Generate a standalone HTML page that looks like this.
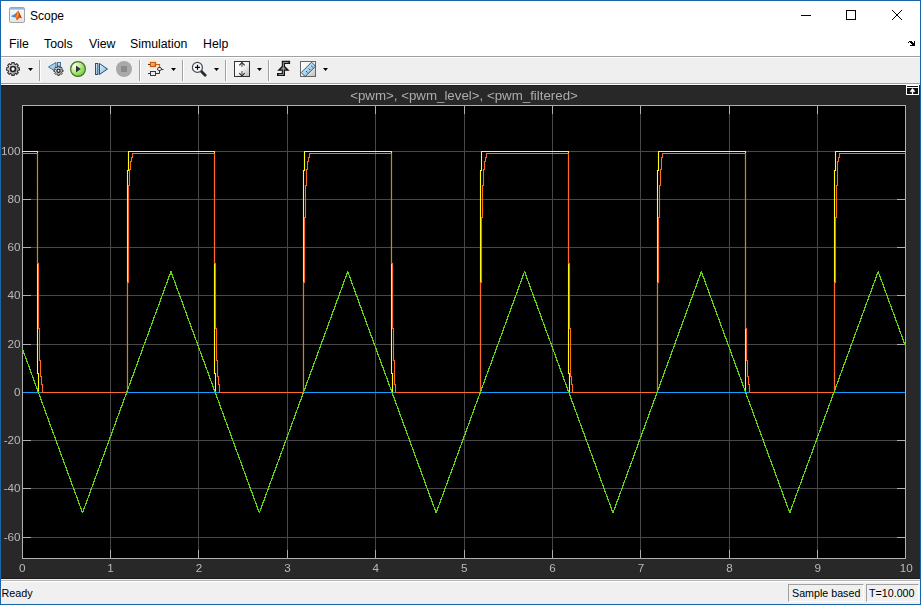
<!DOCTYPE html>
<html><head><meta charset="utf-8"><style>
html,body{margin:0;padding:0;}
body{width:921px;height:605px;position:relative;overflow:hidden;background:#fff;font-family:"Liberation Sans",sans-serif;}
.abs{position:absolute;}
.title{position:absolute;left:30px;top:9px;font-size:12px;color:#000;}
.menu{position:absolute;top:37px;font-size:12.3px;color:#000;}
.xl{position:absolute;top:560.5px;width:40px;text-align:center;font-size:11.7px;color:#b9b9b9;}
.yl{position:absolute;left:0;width:20.6px;text-align:right;font-size:11.7px;color:#b9b9b9;}
.ptitle{position:absolute;left:22px;width:884px;top:88px;text-align:center;font-size:13.3px;color:#acacac;}
.sbox{position:absolute;top:584px;height:16px;border-top:1px solid #a0a0a0;border-left:1px solid #a0a0a0;border-bottom:1px solid #fff;border-right:1px solid #fff;font-size:10.7px;color:#000;line-height:16px;}
</style></head><body>
<div class="abs" style="left:0;top:0;width:921px;height:1px;background:#1964aa"></div>
<div class="abs" style="left:0;top:0;width:1px;height:605px;background:#1964aa"></div>
<div class="abs" style="left:920px;top:0;width:1px;height:605px;background:#1964aa"></div>
<svg class="abs" style="left:9px;top:7px" width="16" height="16" viewBox="0 0 16 16">
<defs><linearGradient id="ib" x1="0" y1="0" x2="0" y2="1"><stop offset="0" stop-color="#fbfbfb"/><stop offset="1" stop-color="#e4e4e4"/></linearGradient></defs>
<rect x="0.5" y="0.5" width="15" height="15" rx="1.2" fill="url(#ib)" stroke="#a4a4a4"/>
<rect x="1" y="1" width="14" height="1.6" fill="#8fb6de"/>
<path d="M1.8 9.3 L6.8 6.4 L8.2 9.6 L5.5 10.6 Z" fill="#3f8fd0"/>
<path d="M6.6 6.6 L9.3 3.6 L11 7.5 L12.8 11.2 L10.8 10.4 L7.8 13.6 L6.6 10.4 Z" fill="#e0561e"/>
<path d="M9.3 3.6 L11 7.5 L12.8 11.2 L10.8 10.4 Z" fill="#b8301a"/>
<path d="M8.2 5.6 L9.3 3.6 L9.6 7.8 L7.6 12.2 L7.3 9.4 Z" fill="#f0a030"/>
</svg>
<div class="title">Scope</div>
<div class="abs" style="left:801px;top:15px;width:10px;height:1px;background:#000"></div>
<div class="abs" style="left:846px;top:10px;width:8px;height:8px;border:1px solid #000"></div>
<svg class="abs" style="left:891px;top:9px" width="12" height="12" viewBox="0 0 12 12"><path d="M1 1 L11 11 M11 1 L1 11" stroke="#000" stroke-width="1"/></svg>
<div class="menu" style="left:9px">File</div>
<div class="menu" style="left:44px">Tools</div>
<div class="menu" style="left:89px">View</div>
<div class="menu" style="left:130px">Simulation</div>
<div class="menu" style="left:203px">Help</div>
<svg class="abs" style="left:904px;top:36px" width="14" height="14" shape-rendering="crispEdges"><g fill="#000"><rect x="4" y="6" width="1" height="1"/><rect x="5" y="5" width="3" height="1"/><rect x="6" y="6" width="3" height="1"/><rect x="7" y="7" width="3" height="1"/><rect x="8" y="8" width="3" height="1"/><rect x="10" y="5" width="1" height="5"/><rect x="6" y="9" width="5" height="1"/></g></svg>
<div class="abs" style="left:1px;top:56px;width:919px;height:1px;background:#a0a0a0"></div>
<div class="abs" style="left:1px;top:57px;width:919px;height:1px;background:#fff"></div>
<div class="abs" style="left:1px;top:58px;width:919px;height:25px;background:#efefef"></div>
<div class="abs" style="left:1px;top:83px;width:919px;height:1px;background:#a0a0a0"></div>
<div class="abs" style="left:1px;top:84px;width:919px;height:1px;background:#fff"></div>
<svg class="abs" style="left:0;top:0" width="921" height="90">
<defs>
<linearGradient id="gg" x1="0" y1="0" x2="1" y2="1"><stop offset="0" stop-color="#fafafa"/><stop offset="1" stop-color="#9a9a9a"/></linearGradient>
<radialGradient id="pg" cx="0.3" cy="0.3" r="0.8"><stop offset="0" stop-color="#ffffff"/><stop offset="0.45" stop-color="#bdee90"/><stop offset="1" stop-color="#6cc832"/></radialGradient>
<linearGradient id="bg" x1="0" y1="0" x2="1" y2="1"><stop offset="0" stop-color="#e6f4fc"/><stop offset="1" stop-color="#6cb4e4"/></linearGradient>
<linearGradient id="wg" x1="0" y1="0" x2="1" y2="1"><stop offset="0" stop-color="#ffffff"/><stop offset="0.5" stop-color="#f4f4f4"/><stop offset="1" stop-color="#b8b8b8"/></linearGradient>
<linearGradient id="og" x1="0" y1="0" x2="1" y2="1"><stop offset="0" stop-color="#ffd9a8"/><stop offset="1" stop-color="#e8781e"/></linearGradient>
</defs>
<g shape-rendering="crispEdges" fill="#a0a0a0">
<rect x="39" y="60" width="1" height="21"/><rect x="139" y="60" width="1" height="21"/><rect x="182" y="60" width="1" height="21"/><rect x="225" y="60" width="1" height="21"/><rect x="268" y="60" width="1" height="21"/>
</g>
<g fill="#fff" shape-rendering="crispEdges">
<rect x="40" y="60" width="1" height="21"/><rect x="140" y="60" width="1" height="21"/><rect x="183" y="60" width="1" height="21"/><rect x="226" y="60" width="1" height="21"/><rect x="269" y="60" width="1" height="21"/>
</g>
<!-- gear -->
<path d="M17.71,67.05 L17.96,67.81 L19.38,67.78 L19.38,70.22 L17.96,70.19 L17.71,70.95 L17.35,71.66 L18.38,72.65 L16.65,74.38 L15.66,73.35 L14.95,73.71 L14.19,73.96 L14.22,75.38 L11.78,75.38 L11.81,73.96 L11.05,73.71 L10.34,73.35 L9.35,74.38 L7.62,72.65 L8.65,71.66 L8.29,70.95 L8.04,70.19 L6.62,70.22 L6.62,67.78 L8.04,67.81 L8.29,67.05 L8.65,66.34 L7.62,65.35 L9.35,63.62 L10.34,64.65 L11.05,64.29 L11.81,64.04 L11.78,62.62 L14.22,62.62 L14.19,64.04 L14.95,64.29 L15.66,64.65 L16.65,63.62 L18.38,65.35 L17.35,66.34Z" fill="url(#gg)" stroke="#333" stroke-width="1.1" stroke-linejoin="round"/>
<circle cx="13" cy="69" r="2.5" fill="#fff" stroke="#222" stroke-width="1.7"/>
<path d="M28 68h5l-2.5 3z" fill="#000"/>
<!-- step back -->
<path d="M48.5 67 L56 62.5 V71.5 Z" fill="url(#bg)" stroke="#3f6f9a" stroke-width="1"/>
<rect x="57.5" y="62.5" width="3" height="6" fill="url(#bg)" stroke="#3f6f9a" stroke-width="1"/>
<path d="M61.83,69.42 L62.00,69.96 L63.02,69.94 L63.02,71.66 L62.00,71.64 L61.83,72.18 L61.57,72.68 L62.30,73.39 L61.09,74.60 L60.38,73.87 L59.88,74.13 L59.34,74.30 L59.36,75.32 L57.64,75.32 L57.66,74.30 L57.12,74.13 L56.62,73.87 L55.91,74.60 L54.70,73.39 L55.43,72.68 L55.17,72.18 L55.00,71.64 L53.98,71.66 L53.98,69.94 L55.00,69.96 L55.17,69.42 L55.43,68.92 L54.70,68.21 L55.91,67.00 L56.62,67.73 L57.12,67.47 L57.66,67.30 L57.64,66.28 L59.36,66.28 L59.34,67.30 L59.88,67.47 L60.38,67.73 L61.09,67.00 L62.30,68.21 L61.57,68.92Z" fill="url(#gg)" stroke="#333" stroke-width="1" stroke-linejoin="round"/>
<circle cx="58.5" cy="70.8" r="1.6" fill="#fff" stroke="#222" stroke-width="1.3"/>
<!-- play -->
<circle cx="78" cy="69" r="7.4" fill="url(#pg)" stroke="#457324" stroke-width="1.2"/>
<path d="M76 65.5 L80.8 69 L76 72.4 Z" fill="#333"/>
<!-- step fwd -->
<rect x="95.5" y="63.5" width="2.4" height="11" fill="url(#bg)" stroke="#2f4f6f" stroke-width="1"/>
<path d="M99.5 63.5 L107.5 69 L99.5 74.5 Z" fill="url(#bg)" stroke="#2f4f6f" stroke-width="1"/>
<!-- stop -->
<circle cx="124" cy="69" r="8" fill="#a9a9a9"/>
<rect x="121" y="66" width="6" height="6" fill="#8a8a8a"/>
<!-- signal hierarchy -->
<rect x="148.5" y="60.5" width="9" height="7" rx="1.5" fill="#ffe9a0" opacity="0.8"/>
<path d="M148 64.5h2M156 64.5h3.5v3M159.5 70.5v3h-3.5M148 73.5h2M161.5 69.5h2" stroke="#333" stroke-width="1" fill="none"/>
<path d="M156 64.5h3.5v3" stroke="#d05a10" stroke-width="1.2" fill="none"/>
<rect x="150.5" y="62.5" width="5" height="4" fill="url(#og)" stroke="#c85a14" stroke-width="1.2"/>
<rect x="157.5" y="67.5" width="4" height="3" rx="1.5" fill="#f4f4f4" stroke="#3a3a3a" stroke-width="1"/>
<rect x="150.5" y="71.5" width="5" height="4" fill="#ececec" stroke="#3a3a3a" stroke-width="1"/>
<path d="M171 68h5l-2.5 3z" fill="#000"/>
<!-- zoom -->
<path d="M201 71 L205.2 75.2" stroke="#2a2a2a" stroke-width="2.8" stroke-linecap="round"/>
<circle cx="197.4" cy="67.4" r="5" fill="#f4f8fc" stroke="#484848" stroke-width="1.2"/>
<path d="M195 67.3h5M197.5 64.8v5" stroke="#000" stroke-width="1.2"/>
<path d="M214 68h5l-2.5 3z" fill="#000"/>
<!-- scale y -->
<rect x="234.5" y="61.5" width="15" height="15" fill="url(#wg)" stroke="#333" stroke-width="1"/>
<path d="M242 62 L242 67" stroke="#888" stroke-width="1.6"/>
<path d="M239.3 65.3 L242 62.6 L244.7 65.3" stroke="#333" stroke-width="1.2" fill="none"/>
<path d="M242 71 L242 76" stroke="#888" stroke-width="1.6"/>
<path d="M239.3 73.2 L242 75.9 L244.7 73.2" stroke="#333" stroke-width="1.2" fill="none"/>
<path d="M257 68h5l-2.5 3z" fill="#000"/>
<!-- trigger -->
<path d="M278.6 74.5 H283.4 V62.4 H288.5" stroke="#141414" stroke-width="3.2" fill="none" stroke-linecap="square"/>
<path d="M278.7 70.2 L283.4 65.5 L288.1 70.2 Z" fill="#8e8e8e" stroke="#141414" stroke-width="1.3" stroke-linejoin="miter"/>
<path d="M278.6 74.5 H283.4 V62.4 H288.5" stroke="#959595" stroke-width="1" fill="none"/>
<!-- ruler -->
<rect x="300.5" y="61.5" width="15" height="15" fill="url(#wg)" stroke="#666" stroke-width="1"/>
<path d="M301.2 72.6 L311.6 62.2 L315.6 66.2 L305.2 76.6 Z" fill="url(#bg)" stroke="#2c3c4c" stroke-width="0.85"/>
<path d="M311.2 65.8l1.6 1.6M308.6 68.4l1.6 1.6M306 71l1.6 1.6" stroke="#2c3c4c" stroke-width="0.9"/>
<path d="M323 68h5l-2.5 3z" fill="#000"/>
</svg>
<div class="abs" style="left:1px;top:85px;width:919px;height:1px;background:#1c1c1c"></div>
<div class="abs" style="left:1px;top:86px;width:919px;height:492px;background:#282828"></div>
<svg class="abs" style="left:0;top:0" width="921" height="605">
<rect x="22" y="105" width="884" height="454" fill="#000"/>
<path d="M110.5 106V558M198.5 106V558M287.5 106V558M375.5 106V558M464.5 106V558M552.5 106V558M640.5 106V558M729.5 106V558M817.5 106V558M23 537.5H905M23 488.5H905M23 440.5H905M23 392.5H905M23 344.5H905M23 295.5H905M23 247.5H905M23 199.5H905M23 151.5H905" stroke="#484848" stroke-width="1" shape-rendering="crispEdges"/>
<path d="M110.5 106V114M110.5 550V558M198.5 106V114M198.5 550V558M287.5 106V114M287.5 550V558M375.5 106V114M375.5 550V558M464.5 106V114M464.5 550V558M552.5 106V114M552.5 550V558M640.5 106V114M640.5 550V558M729.5 106V114M729.5 550V558M817.5 106V114M817.5 550V558M23 537.5H31M897 537.5H905M23 488.5H31M897 488.5H905M23 440.5H31M897 440.5H905M23 392.5H31M897 392.5H905M23 344.5H31M897 344.5H905M23 295.5H31M897 295.5H905M23 247.5H31M897 247.5H905M23 199.5H31M897 199.5H905M23 151.5H31M897 151.5H905" stroke="#b0b0b0" stroke-width="1" shape-rendering="crispEdges"/>
<rect x="22.5" y="105.5" width="883" height="453" fill="none" stroke="#afafaf" stroke-width="1" shape-rendering="crispEdges"/>
<clipPath id="pc"><rect x="22" y="105" width="884" height="454"/></clipPath>
<g clip-path="url(#pc)">
<path d="M21.5 151.5H22.5H23.5H24.5H25.5H26.5H27.5H28.5H29.5H30.5H31.5H32.5H33.5H34.5H35.5H36.5H37.5V373.5H38.5V392.5H39.5H40.5H41.5H42.5H43.5H44.5H45.5H46.5H47.5H48.5H49.5H50.5H51.5H52.5H53.5H54.5H55.5H56.5H57.5H58.5H59.5H60.5H61.5H62.5H63.5H64.5H65.5H66.5H67.5H68.5H69.5H70.5H71.5H72.5H73.5H74.5H75.5H76.5H77.5H78.5H79.5H80.5H81.5H82.5H83.5H84.5H85.5H86.5H87.5H88.5H89.5H90.5H91.5H92.5H93.5H94.5H95.5H96.5H97.5H98.5H99.5H100.5H101.5H102.5H103.5H104.5H105.5H106.5H107.5H108.5H109.5H110.5H111.5H112.5H113.5H114.5H115.5H116.5H117.5H118.5H119.5H120.5H121.5H122.5H123.5H124.5H125.5H126.5H127.5V170.5H128.5V151.5H129.5H130.5H131.5H132.5H133.5H134.5H135.5H136.5H137.5H138.5H139.5H140.5H141.5H142.5H143.5H144.5H145.5H146.5H147.5H148.5H149.5H150.5H151.5H152.5H153.5H154.5H155.5H156.5H157.5H158.5H159.5H160.5H161.5H162.5H163.5H164.5H165.5H166.5H167.5H168.5H169.5H170.5H171.5H172.5H173.5H174.5H175.5H176.5H177.5H178.5H179.5H180.5H181.5H182.5H183.5H184.5H185.5H186.5H187.5H188.5H189.5H190.5H191.5H192.5H193.5H194.5H195.5H196.5H197.5H198.5H199.5H200.5H201.5H202.5H203.5H204.5H205.5H206.5H207.5H208.5H209.5H210.5H211.5H212.5H213.5H214.5V373.5H215.5V392.5H216.5H217.5H218.5H219.5H220.5H221.5H222.5H223.5H224.5H225.5H226.5H227.5H228.5H229.5H230.5H231.5H232.5H233.5H234.5H235.5H236.5H237.5H238.5H239.5H240.5H241.5H242.5H243.5H244.5H245.5H246.5H247.5H248.5H249.5H250.5H251.5H252.5H253.5H254.5H255.5H256.5H257.5H258.5H259.5H260.5H261.5H262.5H263.5H264.5H265.5H266.5H267.5H268.5H269.5H270.5H271.5H272.5H273.5H274.5H275.5H276.5H277.5H278.5H279.5H280.5H281.5H282.5H283.5H284.5H285.5H286.5H287.5H288.5H289.5H290.5H291.5H292.5H293.5H294.5H295.5H296.5H297.5H298.5H299.5H300.5H301.5H302.5H303.5V170.5H304.5V151.5H305.5H306.5H307.5H308.5H309.5H310.5H311.5H312.5H313.5H314.5H315.5H316.5H317.5H318.5H319.5H320.5H321.5H322.5H323.5H324.5H325.5H326.5H327.5H328.5H329.5H330.5H331.5H332.5H333.5H334.5H335.5H336.5H337.5H338.5H339.5H340.5H341.5H342.5H343.5H344.5H345.5H346.5H347.5H348.5H349.5H350.5H351.5H352.5H353.5H354.5H355.5H356.5H357.5H358.5H359.5H360.5H361.5H362.5H363.5H364.5H365.5H366.5H367.5H368.5H369.5H370.5H371.5H372.5H373.5H374.5H375.5H376.5H377.5H378.5H379.5H380.5H381.5H382.5H383.5H384.5H385.5H386.5H387.5H388.5H389.5H390.5H391.5V373.5H392.5V392.5H393.5H394.5H395.5H396.5H397.5H398.5H399.5H400.5H401.5H402.5H403.5H404.5H405.5H406.5H407.5H408.5H409.5H410.5H411.5H412.5H413.5H414.5H415.5H416.5H417.5H418.5H419.5H420.5H421.5H422.5H423.5H424.5H425.5H426.5H427.5H428.5H429.5H430.5H431.5H432.5H433.5H434.5H435.5H436.5H437.5H438.5H439.5H440.5H441.5H442.5H443.5H444.5H445.5H446.5H447.5H448.5H449.5H450.5H451.5H452.5H453.5H454.5H455.5H456.5H457.5H458.5H459.5H460.5H461.5H462.5H463.5H464.5H465.5H466.5H467.5H468.5H469.5H470.5H471.5H472.5H473.5H474.5H475.5H476.5H477.5H478.5H479.5H480.5V170.5H481.5V151.5H482.5H483.5H484.5H485.5H486.5H487.5H488.5H489.5H490.5H491.5H492.5H493.5H494.5H495.5H496.5H497.5H498.5H499.5H500.5H501.5H502.5H503.5H504.5H505.5H506.5H507.5H508.5H509.5H510.5H511.5H512.5H513.5H514.5H515.5H516.5H517.5H518.5H519.5H520.5H521.5H522.5H523.5H524.5H525.5H526.5H527.5H528.5H529.5H530.5H531.5H532.5H533.5H534.5H535.5H536.5H537.5H538.5H539.5H540.5H541.5H542.5H543.5H544.5H545.5H546.5H547.5H548.5H549.5H550.5H551.5H552.5H553.5H554.5H555.5H556.5H557.5H558.5H559.5H560.5H561.5H562.5H563.5H564.5H565.5H566.5H567.5H568.5V373.5H569.5V392.5H570.5H571.5H572.5H573.5H574.5H575.5H576.5H577.5H578.5H579.5H580.5H581.5H582.5H583.5H584.5H585.5H586.5H587.5H588.5H589.5H590.5H591.5H592.5H593.5H594.5H595.5H596.5H597.5H598.5H599.5H600.5H601.5H602.5H603.5H604.5H605.5H606.5H607.5H608.5H609.5H610.5H611.5H612.5H613.5H614.5H615.5H616.5H617.5H618.5H619.5H620.5H621.5H622.5H623.5H624.5H625.5H626.5H627.5H628.5H629.5H630.5H631.5H632.5H633.5H634.5H635.5H636.5H637.5H638.5H639.5H640.5H641.5H642.5H643.5H644.5H645.5H646.5H647.5H648.5H649.5H650.5H651.5H652.5H653.5H654.5H655.5H656.5H657.5V170.5H658.5V151.5H659.5H660.5H661.5H662.5H663.5H664.5H665.5H666.5H667.5H668.5H669.5H670.5H671.5H672.5H673.5H674.5H675.5H676.5H677.5H678.5H679.5H680.5H681.5H682.5H683.5H684.5H685.5H686.5H687.5H688.5H689.5H690.5H691.5H692.5H693.5H694.5H695.5H696.5H697.5H698.5H699.5H700.5H701.5H702.5H703.5H704.5H705.5H706.5H707.5H708.5H709.5H710.5H711.5H712.5H713.5H714.5H715.5H716.5H717.5H718.5H719.5H720.5H721.5H722.5H723.5H724.5H725.5H726.5H727.5H728.5H729.5H730.5H731.5H732.5H733.5H734.5H735.5H736.5H737.5H738.5H739.5H740.5H741.5H742.5H743.5H744.5H745.5V373.5V392.5H746.5H747.5H748.5H749.5H750.5H751.5H752.5H753.5H754.5H755.5H756.5H757.5H758.5H759.5H760.5H761.5H762.5H763.5H764.5H765.5H766.5H767.5H768.5H769.5H770.5H771.5H772.5H773.5H774.5H775.5H776.5H777.5H778.5H779.5H780.5H781.5H782.5H783.5H784.5H785.5H786.5H787.5H788.5H789.5H790.5H791.5H792.5H793.5H794.5H795.5H796.5H797.5H798.5H799.5H800.5H801.5H802.5H803.5H804.5H805.5H806.5H807.5H808.5H809.5H810.5H811.5H812.5H813.5H814.5H815.5H816.5H817.5H818.5H819.5H820.5H821.5H822.5H823.5H824.5H825.5H826.5H827.5H828.5H829.5H830.5H831.5H832.5H833.5H834.5V170.5H835.5V151.5H836.5H837.5H838.5H839.5H840.5H841.5H842.5H843.5H844.5H845.5H846.5H847.5H848.5H849.5H850.5H851.5H852.5H853.5H854.5H855.5H856.5H857.5H858.5H859.5H860.5H861.5H862.5H863.5H864.5H865.5H866.5H867.5H868.5H869.5H870.5H871.5H872.5H873.5H874.5H875.5H876.5H877.5H878.5H879.5H880.5H881.5H882.5H883.5H884.5H885.5H886.5H887.5H888.5H889.5H890.5H891.5H892.5H893.5H894.5H895.5H896.5H897.5H898.5H899.5H900.5H901.5H902.5H903.5H904.5H905.5" fill="none" stroke="#ffff11" stroke-width="1.1"/>
<path d="M23 392.5H905" stroke="#139fff" stroke-width="1.1"/>
<path d="M21.5 153.5H22.5H23.5H24.5H25.5H26.5H27.5H28.5H29.5H30.5H31.5H32.5H33.5H34.5H35.5H36.5H37.5V263.5H38.5V328.5H39.5V360.5H40.5V376.5H41.5V384.5H42.5V392.5H43.5H44.5H45.5H46.5H47.5H48.5H49.5H50.5H51.5H52.5H53.5H54.5H55.5H56.5H57.5H58.5H59.5H60.5H61.5H62.5H63.5H64.5H65.5H66.5H67.5H68.5H69.5H70.5H71.5H72.5H73.5H74.5H75.5H76.5H77.5H78.5H79.5H80.5H81.5H82.5H83.5H84.5H85.5H86.5H87.5H88.5H89.5H90.5H91.5H92.5H93.5H94.5H95.5H96.5H97.5H98.5H99.5H100.5H101.5H102.5H103.5H104.5H105.5H106.5H107.5H108.5H109.5H110.5H111.5H112.5H113.5H114.5H115.5H116.5H117.5H118.5H119.5H120.5H121.5H122.5H123.5H124.5H125.5H126.5H127.5V282.5H128.5V217.5V185.5H129.5V169.5H130.5V161.5H131.5V157.5H132.5V153.5H133.5H134.5H135.5H136.5H137.5H138.5H139.5H140.5H141.5H142.5H143.5H144.5H145.5H146.5H147.5H148.5H149.5H150.5H151.5H152.5H153.5H154.5H155.5H156.5H157.5H158.5H159.5H160.5H161.5H162.5H163.5H164.5H165.5H166.5H167.5H168.5H169.5H170.5H171.5H172.5H173.5H174.5H175.5H176.5H177.5H178.5H179.5H180.5H181.5H182.5H183.5H184.5H185.5H186.5H187.5H188.5H189.5H190.5H191.5H192.5H193.5H194.5H195.5H196.5H197.5H198.5H199.5H200.5H201.5H202.5H203.5H204.5H205.5H206.5H207.5H208.5H209.5H210.5H211.5H212.5H213.5H214.5V263.5H215.5V328.5H216.5V360.5H217.5V376.5H218.5V384.5H219.5V392.5H220.5H221.5H222.5H223.5H224.5H225.5H226.5H227.5H228.5H229.5H230.5H231.5H232.5H233.5H234.5H235.5H236.5H237.5H238.5H239.5H240.5H241.5H242.5H243.5H244.5H245.5H246.5H247.5H248.5H249.5H250.5H251.5H252.5H253.5H254.5H255.5H256.5H257.5H258.5H259.5H260.5H261.5H262.5H263.5H264.5H265.5H266.5H267.5H268.5H269.5H270.5H271.5H272.5H273.5H274.5H275.5H276.5H277.5H278.5H279.5H280.5H281.5H282.5H283.5H284.5H285.5H286.5H287.5H288.5H289.5H290.5H291.5H292.5H293.5H294.5H295.5H296.5H297.5H298.5H299.5H300.5H301.5H302.5H303.5V282.5H304.5V217.5H305.5V185.5H306.5V169.5H307.5V161.5H308.5V157.5H309.5V153.5H310.5H311.5H312.5H313.5H314.5H315.5H316.5H317.5H318.5H319.5H320.5H321.5H322.5H323.5H324.5H325.5H326.5H327.5H328.5H329.5H330.5H331.5H332.5H333.5H334.5H335.5H336.5H337.5H338.5H339.5H340.5H341.5H342.5H343.5H344.5H345.5H346.5H347.5H348.5H349.5H350.5H351.5H352.5H353.5H354.5H355.5H356.5H357.5H358.5H359.5H360.5H361.5H362.5H363.5H364.5H365.5H366.5H367.5H368.5H369.5H370.5H371.5H372.5H373.5H374.5H375.5H376.5H377.5H378.5H379.5H380.5H381.5H382.5H383.5H384.5H385.5H386.5H387.5H388.5H389.5H390.5H391.5V263.5H392.5V328.5H393.5V360.5H394.5V376.5V384.5H395.5V392.5H396.5H397.5H398.5H399.5H400.5H401.5H402.5H403.5H404.5H405.5H406.5H407.5H408.5H409.5H410.5H411.5H412.5H413.5H414.5H415.5H416.5H417.5H418.5H419.5H420.5H421.5H422.5H423.5H424.5H425.5H426.5H427.5H428.5H429.5H430.5H431.5H432.5H433.5H434.5H435.5H436.5H437.5H438.5H439.5H440.5H441.5H442.5H443.5H444.5H445.5H446.5H447.5H448.5H449.5H450.5H451.5H452.5H453.5H454.5H455.5H456.5H457.5H458.5H459.5H460.5H461.5H462.5H463.5H464.5H465.5H466.5H467.5H468.5H469.5H470.5H471.5H472.5H473.5H474.5H475.5H476.5H477.5H478.5H479.5H480.5V282.5H481.5V217.5H482.5V185.5H483.5V169.5H484.5V161.5H485.5V157.5H486.5V153.5H487.5H488.5H489.5H490.5H491.5H492.5H493.5H494.5H495.5H496.5H497.5H498.5H499.5H500.5H501.5H502.5H503.5H504.5H505.5H506.5H507.5H508.5H509.5H510.5H511.5H512.5H513.5H514.5H515.5H516.5H517.5H518.5H519.5H520.5H521.5H522.5H523.5H524.5H525.5H526.5H527.5H528.5H529.5H530.5H531.5H532.5H533.5H534.5H535.5H536.5H537.5H538.5H539.5H540.5H541.5H542.5H543.5H544.5H545.5H546.5H547.5H548.5H549.5H550.5H551.5H552.5H553.5H554.5H555.5H556.5H557.5H558.5H559.5H560.5H561.5H562.5H563.5H564.5H565.5H566.5H567.5H568.5V263.5H569.5V328.5H570.5V360.5V376.5H571.5V384.5H572.5V392.5H573.5H574.5H575.5H576.5H577.5H578.5H579.5H580.5H581.5H582.5H583.5H584.5H585.5H586.5H587.5H588.5H589.5H590.5H591.5H592.5H593.5H594.5H595.5H596.5H597.5H598.5H599.5H600.5H601.5H602.5H603.5H604.5H605.5H606.5H607.5H608.5H609.5H610.5H611.5H612.5H613.5H614.5H615.5H616.5H617.5H618.5H619.5H620.5H621.5H622.5H623.5H624.5H625.5H626.5H627.5H628.5H629.5H630.5H631.5H632.5H633.5H634.5H635.5H636.5H637.5H638.5H639.5H640.5H641.5H642.5H643.5H644.5H645.5H646.5H647.5H648.5H649.5H650.5H651.5H652.5H653.5H654.5H655.5H656.5H657.5V282.5H658.5V217.5H659.5V185.5H660.5V169.5H661.5V161.5V157.5H662.5V153.5H663.5H664.5H665.5H666.5H667.5H668.5H669.5H670.5H671.5H672.5H673.5H674.5H675.5H676.5H677.5H678.5H679.5H680.5H681.5H682.5H683.5H684.5H685.5H686.5H687.5H688.5H689.5H690.5H691.5H692.5H693.5H694.5H695.5H696.5H697.5H698.5H699.5H700.5H701.5H702.5H703.5H704.5H705.5H706.5H707.5H708.5H709.5H710.5H711.5H712.5H713.5H714.5H715.5H716.5H717.5H718.5H719.5H720.5H721.5H722.5H723.5H724.5H725.5H726.5H727.5H728.5H729.5H730.5H731.5H732.5H733.5H734.5H735.5H736.5H737.5H738.5H739.5H740.5H741.5H742.5H743.5H744.5H745.5V263.5V328.5H746.5V360.5H747.5V376.5H748.5V384.5H749.5V392.5H750.5H751.5H752.5H753.5H754.5H755.5H756.5H757.5H758.5H759.5H760.5H761.5H762.5H763.5H764.5H765.5H766.5H767.5H768.5H769.5H770.5H771.5H772.5H773.5H774.5H775.5H776.5H777.5H778.5H779.5H780.5H781.5H782.5H783.5H784.5H785.5H786.5H787.5H788.5H789.5H790.5H791.5H792.5H793.5H794.5H795.5H796.5H797.5H798.5H799.5H800.5H801.5H802.5H803.5H804.5H805.5H806.5H807.5H808.5H809.5H810.5H811.5H812.5H813.5H814.5H815.5H816.5H817.5H818.5H819.5H820.5H821.5H822.5H823.5H824.5H825.5H826.5H827.5H828.5H829.5H830.5H831.5H832.5H833.5H834.5V282.5H835.5V217.5H836.5V185.5H837.5V169.5V161.5H838.5V157.5H839.5V153.5H840.5H841.5H842.5H843.5H844.5H845.5H846.5H847.5H848.5H849.5H850.5H851.5H852.5H853.5H854.5H855.5H856.5H857.5H858.5H859.5H860.5H861.5H862.5H863.5H864.5H865.5H866.5H867.5H868.5H869.5H870.5H871.5H872.5H873.5H874.5H875.5H876.5H877.5H878.5H879.5H880.5H881.5H882.5H883.5H884.5H885.5H886.5H887.5H888.5H889.5H890.5H891.5H892.5H893.5H894.5H895.5H896.5H897.5H898.5H899.5H900.5H901.5H902.5H903.5H904.5H905.5" fill="none" stroke="#ff6929" stroke-width="1.1"/>
<polyline points="22.42,348.825 82.5354,512.875 170.94,271.625 259.345,512.875 347.75,271.625 436.155,512.875 524.56,271.625 612.965,512.875 701.37,271.625 789.775,512.875 878.18,271.625 906.47,348.825" fill="none" stroke="#64d413" stroke-width="1.2" stroke-linejoin="bevel" shape-rendering="crispEdges"/>
</g>
</svg>
<svg class="abs" style="left:906px;top:84px" width="13" height="11"><rect x="0.5" y="0.5" width="12" height="10" fill="#111" stroke="#fff"/><rect x="1" y="1" width="11" height="1" fill="#fff"/><rect x="1" y="3" width="11" height="1" fill="#fff"/><path d="M6.5 10V5" stroke="#fff" stroke-width="1.3"/><path d="M4.2 7.6 L6.5 4.6 L8.8 7.6 Z" fill="#fff" stroke="#fff" stroke-width="0.8"/></svg>
<div class="abs" style="left:0;top:0;width:921px;height:605px;will-change:transform;">
<div class="ptitle">&lt;pwm&gt;, &lt;pwm_level&gt;, &lt;pwm_filtered&gt;</div>
<div class="xl" style="left:2.2px">0</div><div class="xl" style="left:90.6px">1</div><div class="xl" style="left:179.0px">2</div><div class="xl" style="left:267.4px">3</div><div class="xl" style="left:355.8px">4</div><div class="xl" style="left:444.2px">5</div><div class="xl" style="left:532.6px">6</div><div class="xl" style="left:621.0px">7</div><div class="xl" style="left:709.4px">8</div><div class="xl" style="left:797.8px">9</div><div class="xl" style="left:886.2px">10</div>
<div class="yl" style="top:530.4px">-60</div><div class="yl" style="top:481.4px">-40</div><div class="yl" style="top:433.4px">-20</div><div class="yl" style="top:385.4px">0</div><div class="yl" style="top:337.4px">20</div><div class="yl" style="top:288.4px">40</div><div class="yl" style="top:240.4px">60</div><div class="yl" style="top:192.4px">80</div><div class="yl" style="top:144.4px">100</div>
</div>
<div class="abs" style="left:1px;top:578px;width:919px;height:1px;background:#1a1a1a"></div>
<div class="abs" style="left:1px;top:579px;width:919px;height:25px;background:#f0f0f0"></div>
<div class="abs" style="left:1px;top:580px;width:919px;height:1px;background:#b4b4b4"></div>
<div class="abs" style="left:1px;top:581px;width:919px;height:1px;background:#fff"></div>
<div class="abs" style="left:1.5px;top:586.5px;font-size:10.8px;color:#000">Ready</div>
<div class="sbox" style="left:788px;width:74px;"><span style="position:absolute;left:3px;top:0">Sample based</span></div>
<div class="sbox" style="left:866px;width:51px;"><span style="position:absolute;left:2px;top:0">T=10.000</span></div>
<div class="abs" style="left:0;top:604px;width:921px;height:1px;background:#1964aa"></div>
</body></html>
